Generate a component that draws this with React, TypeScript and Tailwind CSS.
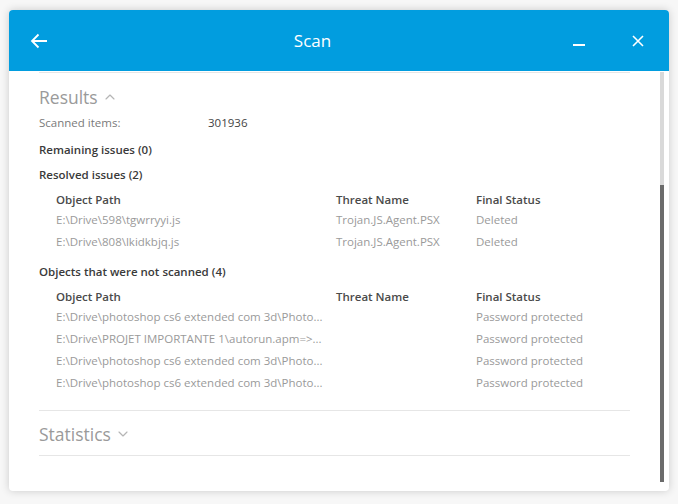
import { ChevronDown, ChevronUp } from 'lucide-react'

const FONT = { fontFamily: '"Segoe UI", "Open Sans", sans-serif' }

interface Row {
  path: string
  threat: string
  status: string
}

const RESOLVED: Row[] = [
  { path: 'E:\\Drive\\598\\tgwrryyi.js', threat: 'Trojan.JS.Agent.PSX', status: 'Deleted' },
  { path: 'E:\\Drive\\808\\lkidkbjq.js', threat: 'Trojan.JS.Agent.PSX', status: 'Deleted' }
]

const NOT_SCANNED: Row[] = [
  { path: 'E:\\Drive\\photoshop cs6 extended com 3d\\Photo...', threat: '', status: 'Password protected' },
  { path: 'E:\\Drive\\PROJET IMPORTANTE 1\\autorun.apm=>...', threat: '', status: 'Password protected' },
  { path: 'E:\\Drive\\photoshop cs6 extended com 3d\\Photo...', threat: '', status: 'Password protected' },
  { path: 'E:\\Drive\\photoshop cs6 extended com 3d\\Photo...', threat: '', status: 'Password protected' }
]

function Table({ rows }: { rows: Row[] }) {
  return (
    <div className="pl-[17px] text-[11.5px]">
      <div className="flex h-[19px] items-center font-semibold text-[#4a4a4a]">
        <span className="w-[280px]">Object Path</span>
        <span className="w-[140px]">Threat Name</span>
        <span>Final Status</span>
      </div>
      {rows.map((r, i) => (
        <div key={i} className="flex h-[22px] items-center text-[#9a9a9a]">
          <span className="w-[280px] whitespace-nowrap">{r.path}</span>
          <span className="w-[140px]">{r.threat}</span>
          <span>{r.status}</span>
        </div>
      ))}
    </div>
  )
}

export default function App() {
  return (
    <div className="h-[504px] w-[678px] bg-[#f7f7f7] pl-[9px] pt-[10px]" style={FONT}>
      <div className="flex h-[481px] w-[660px] flex-col overflow-hidden rounded-[4px] bg-white shadow-[0_0_8px_rgba(0,0,0,0.18)]">
        <div className="flex h-[61px] flex-none items-center bg-[#019ddf] pl-[21px] pr-[25px] text-white">
          <svg width="18" height="16" viewBox="0 0 18 16" fill="none" stroke="white" strokeWidth="1.8">
            <path d="M17 8H2M8.5 1.5 2 8l6.5 6.5" />
          </svg>
          <div className="flex-1 pl-[4px] text-center text-[17px]">Scan</div>
          <div className="mr-[47px] mt-[9px] h-[2px] w-[12px] bg-white" />
          <svg width="12" height="12" viewBox="0 0 12 12" stroke="white" strokeWidth="1.6">
            <path d="M1 1l10 10M11 1 1 11" />
          </svg>
        </div>
        <div className="flex min-h-0 flex-1">
          <div className="flex-1 pl-[30px] pr-[30px]">
            <div className="mt-[1px] h-px bg-[#e6e6e6]" />
            <div className="mt-[12px] flex h-[24px] items-center gap-[4px] text-[17.5px] text-[#9a9a9a]">
              Results
              <ChevronUp size={16} strokeWidth={1.75} className="text-[#b5b5b5]" />
            </div>
            <div className="mt-[6px] flex h-[16px] items-center text-[11.5px]">
              <span className="w-[169px] text-[#7a7a7a]">Scanned items:</span>
              <span className="text-[#444]">301936</span>
            </div>
            <div className="mt-[11px] flex h-[16px] items-center text-[11.5px] font-semibold text-[#3a3a3a]">
              Remaining issues (0)
            </div>
            <div className="mt-[9px] flex h-[16px] items-center text-[11.5px] font-semibold text-[#3a3a3a]">
              Resolved issues (2)
            </div>
            <div className="mt-[7px]">
              <Table rows={RESOLVED} />
            </div>
            <div className="mt-[11px] flex h-[16px] items-center text-[11.5px] font-semibold text-[#3a3a3a]">
              Objects that were not scanned (4)
            </div>
            <div className="mt-[7px]">
              <Table rows={NOT_SCANNED} />
            </div>
            <div className="mt-[16px] h-px bg-[#e6e6e6]" />
            <div className="mt-[11px] flex h-[24px] items-center gap-[4px] text-[17.5px] text-[#9a9a9a]">
              Statistics
              <ChevronDown size={16} strokeWidth={1.75} className="text-[#b5b5b5]" />
            </div>
            <div className="mt-[9px] h-px bg-[#e6e6e6]" />
          </div>
          <div className="mr-[5px] mt-[1px] mb-[9px] flex w-[4px] flex-col">
            <div className="h-[113px] bg-[#d9d9d9]" />
            <div className="flex-1 bg-[#6b6b6b]" />
          </div>
        </div>
      </div>
    </div>
  )
}
